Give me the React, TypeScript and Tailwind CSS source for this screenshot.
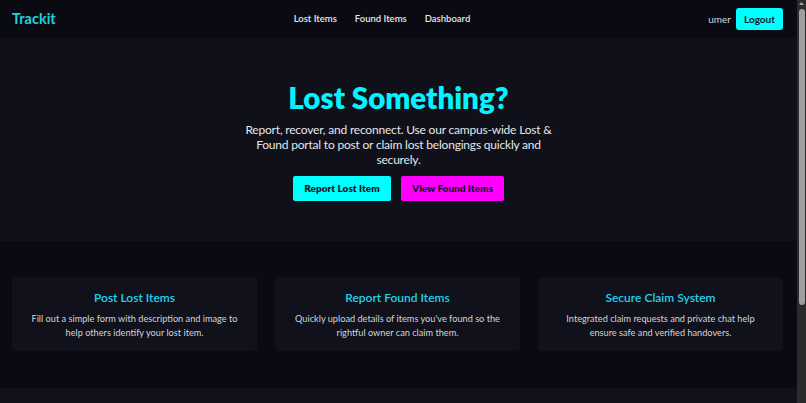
const features = [
  {
    title: "Post Lost Items",
    text: "Fill out a simple form with description and image to help others identify your lost item.",
  },
  {
    title: "Report Found Items",
    text: "Quickly upload details of items you've found so the rightful owner can claim them.",
  },
  {
    title: "Secure Claim System",
    text: "Integrated claim requests and private chat help ensure safe and verified handovers.",
  },
];

const Navbar = () => (
  <nav className="flex h-[38px] items-center justify-between bg-[#0a0b12] pl-3 pr-[14px]">
    <a href="#" className="text-[14.5px] font-bold text-[#20d0dc]">
      Trackit
    </a>
    <div className="flex items-center gap-[18px] text-[9.5px] font-semibold text-[#e5e7eb]">
      <a href="#">Lost Items</a>
      <a href="#">Found Items</a>
      <a href="#">Dashboard</a>
    </div>
    <div className="flex items-center gap-[5px]">
      <span className="text-[10px] text-[#d1d5db]">umer</span>
      <button
        type="button"
        className="h-[22px] w-[47px] rounded-[3px] bg-[#00ffff] text-[10px] font-bold text-[#0f172a]"
      >
        Logout
      </button>
    </div>
  </nav>
);

const Hero = () => (
  <section className="flex flex-col items-center bg-[#0f1019] pb-[40px] pt-[42px] text-center">
    <h1 className="text-[29.5px] leading-[36px] font-extrabold text-[#00f5ff]">Lost Something?</h1>
    <p className="mt-[6px] max-w-[312px] text-[12px] leading-[15px] tracking-[-0.2px] text-[#e5e7eb]">
      Report, recover, and reconnect. Use our campus-wide Lost &amp; Found portal to post or claim
      lost belongings quickly and securely.
    </p>
    <div className="mt-[9px] flex gap-[10px]">
      <button
        type="button"
        className="h-[25px] w-[98px] rounded-[2px] bg-[#00ffff] text-[10px] font-extrabold text-[#111827]"
      >
        Report Lost Item
      </button>
      <button
        type="button"
        className="h-[25px] w-[103px] rounded-[2px] bg-[#ff00ff] text-[10px] font-extrabold text-[#111827]"
      >
        View Found Items
      </button>
    </div>
  </section>
);

const Features = () => (
  <section className="grid grid-cols-3 gap-[18px] bg-[#0a0b12] pb-[37px] pl-3 pr-[14px] pt-[36px]">
    {features.map((f) => (
      <div key={f.title} className="rounded-[4px] bg-[#10111a] px-[16px] pb-[12px] pt-[13px] text-center">
        <h3 className="text-[12px] leading-[16px] font-semibold text-[#22d3ee]">{f.title}</h3>
        <p className="mt-[6px] text-[9.2px] leading-[13.5px] text-[#d1d5db]">{f.text}</p>
      </div>
    ))}
  </section>
);

// page scrollbar as seen in the screenshot
const Scrollbar = () => (
  <div className="flex w-[9px] shrink-0 flex-col items-center bg-[#2b2b2b]">
    <svg width="9" height="8" viewBox="0 0 9 8" className="shrink-0">
      <path d="M4.5 2 L7 5 L2 5 Z" fill="#a3a3a3" />
    </svg>
    <div className="mt-[1px] h-[296px] w-[6px] rounded-full bg-[#9f9f9f]" />
  </div>
);

export default function App() {
  return (
    <div
      className="flex h-[403px] overflow-hidden bg-[#0a0b12]"
      style={{ fontFamily: "Lato, 'Noto Sans', sans-serif" }}
    >
      <main className="min-w-0 flex-1">
        <Navbar />
        <Hero />
        <Features />
        <footer className="h-[138px] bg-[#10111a]" />
      </main>
      <Scrollbar />
    </div>
  );
}
